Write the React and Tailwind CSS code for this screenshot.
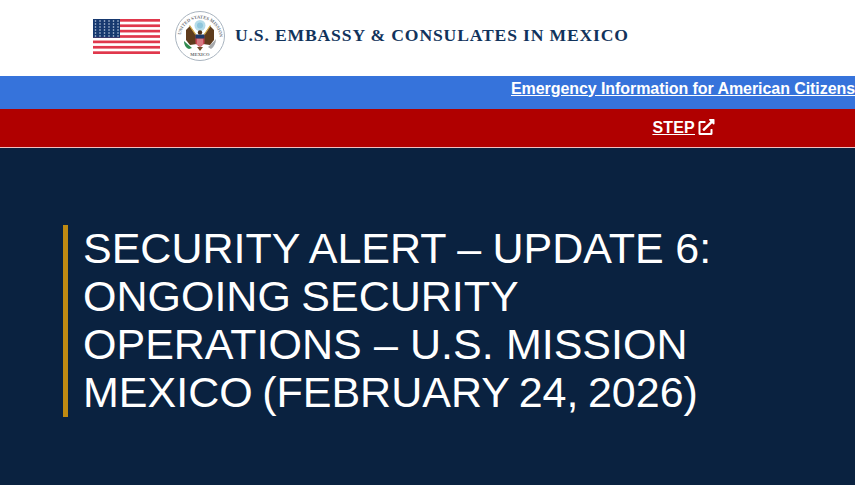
import { FaExternalLinkAlt } from "react-icons/fa"

function Flag() {
  const stripes = [0, 2, 4, 6, 8, 10, 12]
  return (
    <svg width="67" height="35" viewBox="0 0 67 35" className="shrink-0">
      <rect width="67" height="35" fill="#fff" />
      {stripes.map((i) => (
        <rect key={i} y={(i * 35) / 13} width="67" height={35 / 13} fill="#e0374c" />
      ))}
      <rect width="27" height="18.8" fill="#17396f" />
      {[2, 5, 8, 11, 14, 17].map((y) =>
        [2.5, 7, 11.5, 16, 20.5, 25].map((x) => (
          <circle key={`${x}-${y}`} cx={x} cy={y} r="0.8" fill="#c9d6e8" />
        ))
      )}
    </svg>
  )
}

function Seal() {
  return (
    <svg width="50" height="50" viewBox="0 0 50 50" className="shrink-0">
      <circle cx="25" cy="25" r="24.5" fill="#fff" stroke="#a9b4bf" strokeWidth="1" />
      <path id="sealTop" d="M5.5 27a19.5 19.5 0 0 1 39 0" fill="none" />
      <text fontSize="4.6" fontFamily="Liberation Serif, serif" fill="#6f747b" fontWeight="700">
        <textPath href="#sealTop" startOffset="3">UNITED STATES MISSION</textPath>
      </text>
      <text x="25" y="45" textAnchor="middle" fontSize="4.6" fontFamily="Liberation Serif, serif" fill="#6a6c70" fontWeight="700">
        MEXICO
      </text>
      {/* crest */}
      <circle cx="25" cy="14.5" r="5.5" fill="#b5dcea" />
      <circle cx="25" cy="14.5" r="3" fill="#8fc6dc" />
      {/* arrows and olive branch */}
      <path d="M9 30c2 2 5 4 8 7l-3 1c-3-1-5-4-5-8z" fill="#2f8a4e" />
      <path d="M41 28c-2 3-5 5-8 8l3 2c3-2 5-6 5-10z" fill="#a6a8ab" />
      {/* wings */}
      <path d="M22 25 L15 15 L11 19 L11 29 L15 34 L22 33Z" fill="#5f3c1d" />
      <path d="M28 25 L35 15 L39 19 L39 29 L35 34 L28 33Z" fill="#5f3c1d" />
      <path d="M14.5 14.5 L21 24 M35.5 14.5 L29 24" stroke="#d2ab4a" strokeWidth="1.3" />
      {/* shield */}
      <path d="M20.5 24h9v8.5l-4.5 4-4.5-4z" fill="#c74452" />
      <path d="M23 27.5v7M25 27.5v8.5M27 27.5v7" stroke="#f3dfe0" strokeWidth="0.7" />
      <rect x="20.5" y="23.5" width="9" height="4" fill="#1d3a6b" />
      <circle cx="25" cy="21.5" r="2.2" fill="#4f3018" />
      <path d="M22 36l3 4 3-4z" fill="#6f4a28" />
    </svg>
  )
}

export default function App() {
  return (
    <div className="h-[485px] overflow-hidden bg-[#0a2240] font-['Liberation_Sans',sans-serif]">
      <header className="h-[76px] bg-white flex items-center pl-[93px] pb-[4px]">
        <Flag />
        <div className="ml-[15px]">
          <Seal />
        </div>
        <span className="ml-[10px] font-['Liberation_Serif',serif] font-bold text-[17.6px] tracking-[0.85px] text-[#11335c] whitespace-nowrap pb-[1px]">
          U.S. EMBASSY &amp; CONSULATES IN MEXICO
        </span>
      </header>

      <div className="h-[33px] bg-[#3673db] flex items-center justify-end pb-[8px]">
        <a href="#" className="text-white text-base font-bold underline whitespace-nowrap tracking-[-0.07px]">
          Emergency Information for American Citizens
        </a>
      </div>

      <div className="h-[39px] bg-[#b00000] border-b border-[#f0c0c0] flex items-center justify-end pr-[140px]">
        <a href="#" className="text-white text-base font-bold underline whitespace-nowrap tracking-[0.2px]">
          STEP
          <FaExternalLinkAlt className="inline-block ml-[3px] align-[-2px] w-[17px] h-[16px]" />
        </a>
      </div>

      <main className="pt-[77px] pl-[63px] pr-[100px]">
        <h1 className="flow-root border-l-[5px] border-[#bf8a12] pl-[15px] text-white text-[43px] leading-[48px] font-normal">
          <div className="-mt-px pb-px">
            <span className="[word-spacing:-0.5px]">SECURITY ALERT – UPDATE 6:</span>{" "}
            <span className="[word-spacing:-1.5px]">ONGOING SECURITY</span>{" "}
            <span className="[word-spacing:0.25px]">OPERATIONS – U.S. MISSION</span>{" "}
            <span className="[word-spacing:-2.4px]">MEXICO (FEBRUARY 24, 2026)</span>
          </div>
        </h1>
      </main>
    </div>
  )
}
